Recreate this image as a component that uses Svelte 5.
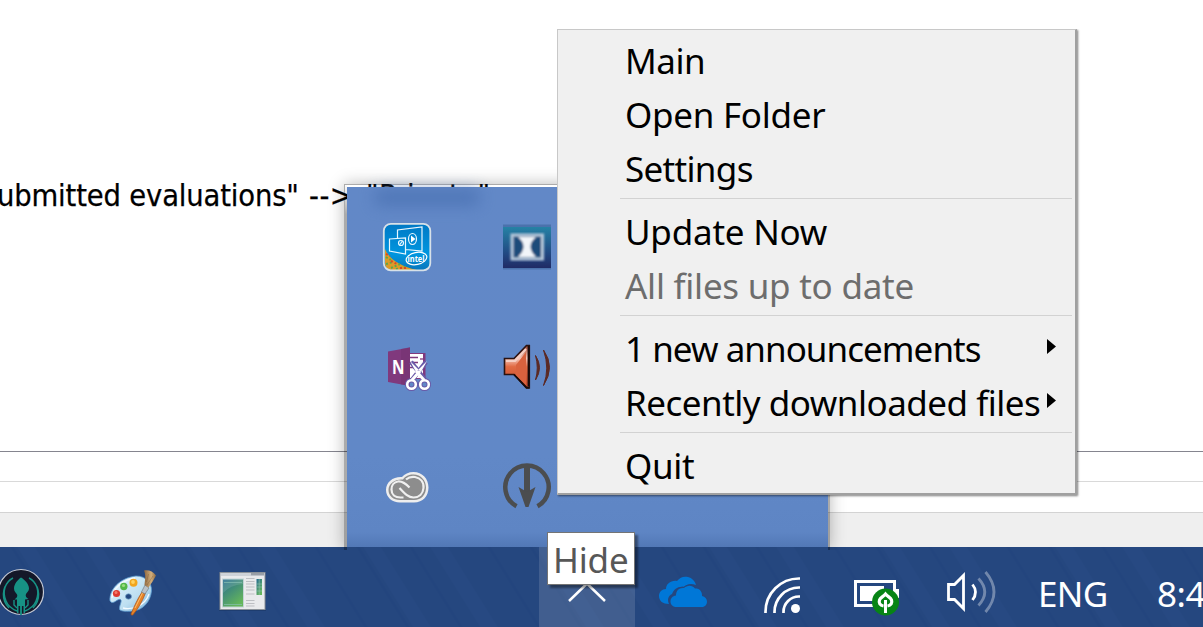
<script>
  const groups = [
    [
      { label: 'Main', gap: -0.5 },
      { label: 'Open Folder', gap: -0.28 },
      { label: 'Settings', gap: -0.68 }
    ],
    [
      { label: 'Update Now', gap: -0.22 },
      { label: 'All files up to date', gap: -0.25, disabled: true }
    ],
    [
      { label: '1 new announcements', gap: -0.96, sub: true },
      { label: 'Recently downloaded files', gap: -0.5, sub: true }
    ],
    [{ label: 'Quit', gap: -0.3 }]
  ];
</script>

<div class="screen">
  <main class="document">
    <p class="line"><span class="a">ubmitted evaluations"</span><span class="b">--&gt;</span><span class="c">"Private".</span></p>
    <div class="pane first"></div>
    <div class="pane second"></div>
    <div class="status"></div>
  </main>

  <footer class="taskbar">
    <svg class="streaks" width="1203" height="80" viewBox="0 0 1203 80">
      <defs>
        <pattern id="streak" width="173" height="80" patternUnits="userSpaceOnUse" patternTransform="skewX(32)">
          <path d="M12 0v80M65 0v80M143 0v80" stroke="#183c78" stroke-opacity=".2" stroke-width="3" />
          <path d="M26 0v80M93 0v80" stroke="#4166a0" stroke-opacity=".08" stroke-width="17" />
        </pattern>
      </defs>
      <rect width="1203" height="80" fill="url(#streak)" />
    </svg>

    <div class="apps">
      <svg width="75" height="80" viewBox="0 547 75 80">
        <circle cx="21" cy="592" r="22.5" fill="#141829" stroke="#c5cad6" stroke-width="1.2" />
        <path d="M21 577.5c-3 2-7 6.500-7 11 0 3 2 4 3 6 1 2-1 4-2.500 5l2.500 0V613h1.500v-7h1.600v9h1.800v-9h1.600v7H25v-13.500l3.500-.5c-2-1-3.500-3-2.500-5 1-2 3-3 3-5.500 0-4.500-4.500-9-8-11z" fill="#179285" />
        <g fill="none" stroke="#179285" stroke-width="1.400">
          <path d="M13 578C5 582 2 592 6 601c2 5 6 8 11 10M9 581C2 588 1 600 9 608M29 578c8 4 11 14 7 23-2 5-6 8-11 10M33 581c7 7 8 19 0 27M14 600v5l3 3M28 600v5l-3 3" />
        </g>
      </svg>
      <svg width="115" height="80" viewBox="75 547 115 80">
        <defs>
          <linearGradient id="pal" x1="0" y1="0" x2="1" y2="1"><stop offset="0" stop-color="#e9f7ff" /><stop offset=".6" stop-color="#bddff1" /><stop offset="1" stop-color="#75aeda" /></linearGradient>
          <linearGradient id="bristle" x1="0" y1="0" x2="1" y2="0"><stop offset="0" stop-color="#8c653d" /><stop offset=".6" stop-color="#d2ae7b" /><stop offset="1" stop-color="#8e693f" /></linearGradient>
        </defs>
        <path d="M110 601C109 590 119 578 136 576c10 0 16 7 15.500 15-1 11-9 19-18 20-6 .7-14 .5-14-2-.2-4 3-8 1-9.500-3-1.500-7 6-10.500 1.500z" fill="url(#pal)" stroke="#5a99ce" stroke-width=".8" />
        <path d="M112 598c1-9 10-18 23-20M123 608c9 2 22-2 26-14" fill="none" stroke="#f5fcff" stroke-width="1.300" />
        <ellipse cx="128.500" cy="596.500" rx="3" ry="2.700" fill="#24477f" stroke="#75a9cf" stroke-width=".7" />
        <circle cx="116.500" cy="593.500" r="3.600" fill="#dc3a31" /><circle cx="116" cy="592.500" r="1.500" fill="#f47a69" />
        <circle cx="123.800" cy="586.500" r="3.700" fill="#54b848" /><circle cx="123.500" cy="585.500" r="1.600" fill="#9bdc7d" />
        <circle cx="133.500" cy="582.800" r="4" fill="#f2a51e" /><circle cx="133" cy="582" r="1.900" fill="#ffd25d" />
        <path d="M142 592l3.300 1.500c-3 8-7 15-12.500 21.500-1.200.5-2-.2-1.600-1.500 3-7 6-14 10.800-21.500z" fill="#e58228" stroke="#a85217" stroke-width=".7" />
        <path d="M143 592l-8 16" stroke="#ffc06a" stroke-width="1" />
        <path d="M145 585l4 3-4 6-3.500-2z" fill="#bac2c9" stroke="#67727b" stroke-width=".6" />
        <path d="M144 570.500c4-1 9 .5 12 5-2 4-4 7-7.500 12l-4-2.500c.5-5 1.500-10-.5-14.500z" fill="url(#bristle)" />
        <path d="M147 585l6-9M146.500 582l2-8" stroke="#725332" stroke-width=".6" opacity=".6" />
      </svg>
      <svg width="110" height="80" viewBox="190 547 110 80">
        <defs><linearGradient id="scr" x1="0" y1="0" x2=".6" y2="1"><stop offset="0" stop-color="#246b91" /><stop offset="1" stop-color="#65b65b" /></linearGradient></defs>
        <rect x="219" y="572" width="47" height="39" fill="#18345f" opacity=".5" />
        <rect x="220" y="572.500" width="45" height="37" fill="#e9eaec" stroke="#8b929a" />
        <rect x="221" y="573" width="43" height="3" fill="#ced2d8" /><rect x="251" y="573" width="13" height="2.300" fill="#999fa7" />
        <rect x="222.500" y="579" width="21" height="28" fill="url(#scr)" stroke="#c2d3d5" />
        <path d="M223 593q7-8 20-9v-5h-20z" fill="#fff" opacity=".13" /><path d="M224 582.500h18M224 604.500h18" stroke="#87c0b3" stroke-width=".7" />
        <path d="M246 578.500h8.500m-8.500 3h8.500m-8.500 2.500h8.500m-8.500 3h8.500m-8.500 3h8.500m-8.500 4h8.500m-8.500 6.500h8.500m-8.500 3h8.500m-8.500 2.500h8.500" stroke="#bdbfc3" stroke-width="1" />
        <rect x="256.500" y="579" width="5.500" height="16" fill="url(#scr)" /><path d="M256.500 584h5.500m-5.500 3h5.500m-5.500 4h5.500M259.200 579v16" stroke="#9cc6bf" stroke-width=".5" />
      </svg>
    </div>

    <div class="notification">
      <div class="chevron">
        <svg width="96" height="80" viewBox="539 547 96 80"><path d="M569 601l18-17.500L605 601" fill="none" stroke="#fff" stroke-width="2.500" /></svg>
      </div>
      <svg width="96" height="80" viewBox="635 547 96 80">
        <path d="M669 604c-6 0-10-3-10-8 0-4 3-7 7-7 0-5 5-9 11-8 3-4 7-5 11-4 4 1 7 4 8 8-5-2-9-1-12 2-6-1-10 2-12 7-4 2-5 6-3 10z" fill="#0077d7" />
        <path d="M677 607c-4 0-6.500-2-6.500-5.500 0-3 2-5.500 5.500-6 0-5 3-8 8-7.500 3-3 8-3.500 11 .5 2 0 5 .5 6 3 1 1.500 1 3 1 4.500 3 .5 5 3 5 5.500 0 3-2 5.500-5 5.500z" fill="#0077d7" stroke="#25477f" stroke-width="2.400" paint-order="stroke" />
      </svg>
      <svg width="96" height="80" viewBox="731 547 96 80">
        <g fill="none" stroke="#fff" stroke-width="2.700"><path d="M765.500 613v-1a33.500 33.500 0 0 1 33.500-33.500h1M774.500 613v-1a24.500 24.500 0 0 1 24.500-24.500h1M783.500 613v-1a15.500 15.500 0 0 1 15.500-15.500h1" /></g><circle cx="795.500" cy="608.500" r="4.500" fill="#fff" />
      </svg>
      <svg width="96" height="80" viewBox="827 547 96 80">
        <rect x="855.500" y="581.500" width="39" height="24" fill="none" stroke="#fff" stroke-width="3" /><path d="M896 589h3v9h-3z" fill="#fff" /><path d="M860 586h24v4h-2v11h-22z" fill="#fff" />
        <circle cx="885.500" cy="602" r="13.500" fill="#078415" />
        <path d="M883.500 606c-3.500-.5-5-3-4-6 .8-2.500 3.500-3 6-6 2.500 3 5.200 3.500 6 6 1 3-.5 5.500-4 6" fill="none" stroke="#fff" stroke-width="3.200" /><path d="M885.500 600v13" stroke="#fff" stroke-width="3" />
      </svg>
      <svg width="96" height="80" viewBox="923 547 96 80">
        <g fill="none" stroke="#fff" stroke-width="2.800"><path d="M948.500 584.500h6l9-9v33l-9-9h-6z" /><path d="M972.500 584.500q6 7.500 0 15.500" /></g>
        <g fill="none" stroke="#fff" stroke-width="2.800" opacity=".35"><path d="M978.500 578.500q12.500 13.500 0 27M985.500 572q17 20 0 40" /></g>
      </svg>
      <span class="lang">ENG</span>
      <span class="clock">8:4</span>
    </div>
  </footer>

  <section class="flyout">
    <div class="ghost"></div>
    <div class="cell">
      <svg width="50" height="50" viewBox="382 222 50 50">
        <defs><linearGradient id="intel" x1="0" y1="0" x2="0" y2="1"><stop offset="0" stop-color="#0079c5" /><stop offset=".65" stop-color="#0096df" /><stop offset="1" stop-color="#0877bc" /></linearGradient></defs>
        <rect x="384" y="224" width="46.500" height="46" rx="7" fill="url(#intel)" />
        <path d="M385 249c4 10 15 17 32 21h-25q-7 0-7-7z" fill="#dc9a28" />
        <path d="M386 257l5 3m-5 4 7-2m-2 6 9-4m-4 5 10-2" stroke="#58a94a" stroke-width="2" stroke-dasharray="2 2" /><path d="M386 254l4 2m1 5 6 3m3 4 6 0" stroke="#d94728" stroke-width="2" stroke-dasharray="2 2" />
        <g fill="none" stroke="#e8f7ff" stroke-width="1.200"><path d="M397.500 238v-8l24.500-3v24l-16-1.500M389.500 239l16 -1v16l-16-3z" /><ellipse cx="412.500" cy="239" rx="4" ry="5.500" /><circle cx="401" cy="243" r="2.500" /><path d="M399.500 245l3-4" /></g><path d="M411 235.500l4.500 3.500-4.500 3.500z" fill="#fff" />
        <ellipse cx="416.500" cy="258.500" rx="10.500" ry="6" fill="none" stroke="#fff" stroke-width="1.200" transform="rotate(-12 416.500 258.500)" /><text x="407.500" y="262" textLength="17" lengthAdjust="spacingAndGlyphs" class="intel">intel</text>
        <rect x="383.800" y="223.800" width="46.500" height="46.500" rx="7" fill="none" stroke="#d7e1e8" stroke-width="1.800" />
      </svg>
    </div>
    <div class="cell">
      <svg width="50" height="50" viewBox="502 222 50 50">
        <defs><linearGradient id="dolby" x1="0" y1="0" x2="0" y2="1"><stop offset="0" stop-color="#2682a5" /><stop offset=".65" stop-color="#214882" /><stop offset="1" stop-color="#202b65" /></linearGradient><filter id="soft"><feGaussianBlur stdDeviation="1" /></filter></defs>
        <rect x="503" y="224.500" width="48" height="45" fill="#345b91" opacity=".5" /><rect x="503" y="227" width="48" height="41" fill="url(#dolby)" />
        <g filter="url(#soft)"><rect x="512" y="235" width="30.500" height="24" fill="#1f4b7a" stroke="#b5c8da" stroke-width="3" /><path d="M518 237h18q-11 9 0 20h-18q11-11 0-20z" fill="#f2f5f9" /></g>
      </svg>
    </div>
    <div class="cell"></div><div class="cell"></div>
    <div class="cell">
      <svg width="50" height="50" viewBox="382 342 50 50">
        <path d="M408 353h17.500v26H408z" fill="#80397d" /><path d="M410 354h13v24h-13z" fill="#fff" /><path d="M410 357.500h8m-8 5h8m-8 5h8" stroke="#80397d" stroke-width="1.300" /><path d="M420 359h5" stroke="#80397d" stroke-width="1.300" />
        <path d="M388 351.500l22-4V386l-22-4z" fill="#80397d" /><path d="M401 349l9-1.700V386l-9-1.600z" fill="#72316f" opacity=".5" /><text x="392" y="374" class="note" textLength="12.500" lengthAdjust="spacingAndGlyphs">N</text>
        <g fill="none" stroke="#695aa8" stroke-width="4.500"><path d="M411 362l14 18M426 362l-14 18" /><circle cx="411.500" cy="384.500" r="4.300" /><circle cx="424.500" cy="384.500" r="4.300" /></g>
        <g fill="none" stroke="#fff" stroke-width="2.600"><path d="M412 380l8-9M424 380l-8-9" stroke-width="3" /><circle cx="411.500" cy="384.500" r="4.300" /><circle cx="424.500" cy="384.500" r="4.300" /></g><path d="M410 361l11 11-3 3.500zM427 361l-11 11 3 3.500z" fill="#fff" />
      </svg>
    </div>
    <div class="cell">
      <svg width="50" height="50" viewBox="502 342 50 50">
        <defs><linearGradient id="horn" x1="0" y1="0" x2="0" y2="1"><stop offset="0" stop-color="#9e4531" /><stop offset=".3" stop-color="#f5c6b9" /><stop offset=".5" stop-color="#e16a43" /><stop offset="1" stop-color="#bd482a" /></linearGradient></defs>
        <path d="M504.500 358.500h9.500l12.500-13h2.800v42.500h-2.800L514 374.500h-9.500z" fill="url(#horn)" stroke="#2a1210" stroke-width="1.600" />
        <path d="M528.500 346v40M514 374.500l12.500 13h2.500" fill="none" stroke="#170b0b" stroke-width="1.800" /><path d="M506 361h9l11-12" fill="none" stroke="#f6cfc4" stroke-width="2" /><path d="M516 365l10-13v33l-10-10z" fill="#d9623e" />
        <path d="M535.500 355.500q8 12 0 24.500q3.500-12 0-24.500M543.500 350q12 17 0 35.500q6.500-17 0-35.500" fill="#5b2924" stroke="#5b2924" stroke-width="1" />
      </svg>
    </div>
    <div class="cell"></div><div class="cell"></div>
    <div class="cell">
      <svg width="50" height="50" viewBox="382 462 50 50">
        <path d="M400 502.500h14c9 0 14.500-6.500 14.500-15s-6-15.500-15-15.500c-5 0-9 2-11.500 5-9-.5-16 5-16 13 0 7 6 12.500 14 12.500z" fill="#eee" />
        <path d="M400 500h14c7.500 0 12-5.500 12-12.500s-5-13-12.500-13c-5 0-8 1.500-10.500 5-8-.5-14.500 4-14.500 10.500 0 6 5 10 11.500 10z" fill="#8d8d8d" />
        <path d="M406 479.500c3-2.500 6-3 9-2.500 5.500 1 9 5 8.500 11-.6 6-4.500 9.500-10 9.500-5 0-8-3-14-9.500M409.500 487.500c-4-4-7-6.500-11.500-6-4 .5-6.500 4-6.500 8 0 5 3.500 8 9 8h3" fill="none" stroke="#f0f0f0" stroke-width="2.200" />
      </svg>
    </div>
    <div class="cell">
      <svg width="50" height="50" viewBox="502 462 50 50">
        <path d="M516.500 506.200a21.700 21.700 0 1 1 21 0" fill="none" stroke="#4b4d4f" stroke-width="4.500" /><path d="M527 465v35" stroke="#4b4d4f" stroke-width="6" /><path d="M518.500 487l8.500 5 8.500-5-7 20h-3z" fill="#4b4d4f" />
      </svg>
    </div>
    <div class="cell"></div><div class="cell"></div>
  </section>

  <nav class="menu">
    {#each groups as group, i}
      {#if i > 0}<hr />{/if}
      {#each group as item}
        <div class="item" class:disabled={item.disabled}>
          <span style:letter-spacing="{item.gap}px">{item.label}</span>
          {#if item.sub}<i class="arrow"></i>{/if}
        </div>
      {/each}
    {/each}
  </nav>

  <div class="tooltip">Hide</div>
</div>

<style>
  :global(body) { margin: 0; overflow: hidden; }
  .screen { position: relative; width: 1203px; height: 627px; overflow: hidden; background: #fff; display: flex; flex-direction: column; font-family: "Noto Sans", "Open Sans", sans-serif; }
  svg { display: block; flex: none; }
  .document { height: 547px; display: flex; flex-direction: column; box-sizing: border-box; padding-top: 176px; }
  .line { margin: 0; height: 40px; line-height: 40px; font-family: "DejaVu Sans Condensed", "DejaVu Sans", sans-serif; font-stretch: condensed; font-size: 30.5px; white-space: pre; display: flex; color: #000; -webkit-text-stroke: .25px #000; }
  .line span { flex: none; }
  .a { width: 312px; margin-left: -3px; letter-spacing: -0.15px; }
  .b { width: 57px; letter-spacing: 0.5px; }
  .c { letter-spacing: 0.4px; }
  .pane { box-sizing: border-box; }
  .first { margin-top: 235px; height: 30px; border-top: 1px solid #85858f; }
  .second { height: 31px; border-top: 1px solid #d9d9d9; }
  .status { flex: 1; background: #efefef; border-top: 1px solid #d3d3d3; }
  .taskbar { position: relative; height: 80px; background: #25477f; display: flex; justify-content: space-between; color: #fff; }
  .streaks { position: absolute; inset: 0; }
  .apps, .notification { display: flex; position: relative; }
  .notification { width: 664px; }
  .chevron { background: rgba(255, 255, 255, .13); width: 96px; }
  .lang, .clock { font-size: 35px; line-height: 80px; padding-top: 7px; height: 73px; flex: none; }
  .lang { width: 138px; padding-left: 19px; box-sizing: border-box; line-height: 80px; letter-spacing: -0.6px; }
  .clock { white-space: nowrap; letter-spacing: -0.5px; }
  .flyout { position: absolute; left: 347px; top: 184px; width: 481px; height: 360px; padding-top: 3px; display: grid; grid-template-columns: repeat(4, 120px); grid-template-rows: repeat(3, 120px); background: linear-gradient(#6288c7, #6188c7 270px, #5e85c4 345px, #5278b6) 0 3px / 100% 360px no-repeat; }
  .flyout::before { content: ""; position: absolute; left: -3px; right: -2px; top: 0; bottom: -3px; box-sizing: border-box; border: 1px solid rgba(0, 0, 0, .33); border-bottom: 0; box-shadow: 0 0 15px rgba(0, 0, 0, .28); clip-path: inset(-25px -25px 0 -25px); }
  .flyout::after { content: ""; position: absolute; left: -2px; right: -1px; top: 1px; bottom: -3px; box-sizing: border-box; border: solid; border-width: 0 1px 0 2px; border-image: linear-gradient(rgba(0, 0, 0, 0), rgba(0, 0, 0, .33) 30px) 1; }
  .ghost { position: absolute; left: 28px; top: 6px; width: 104px; height: 15px; background: #4068aa; opacity: .6; filter: blur(8px); }
  .cell { display: flex; align-items: center; justify-content: center; }
  .intel { font: bold 9px "Open Sans", sans-serif; fill: #fff; }
  .note { font: bold 19px "Open Sans", sans-serif; fill: #fff; }
  .menu { position: absolute; left: 557px; top: 29px; width: 520px; height: 466px; box-sizing: border-box; padding-top: 4px; border: 1px solid #c8c8c8; border-right: 2px solid #a0a0a0; border-bottom: 2px solid #a0a0a0; background: #f0f0f0; box-shadow: 1px 1px 2px rgba(0, 0, 0, .5); clip-path: inset(0 -6px -6px 0); }
  .item { height: 54px; display: flex; align-items: center; justify-content: space-between; padding: 0 19px 0 67px; font-size: 35px; line-height: 54px; color: #000; white-space: nowrap; }
  .disabled { color: #6d6d6d; }
  .arrow { flex: none; width: 9px; height: 15px; background: #000; clip-path: polygon(0 0, 100% 50%, 0 100%); margin-top: -5px; }
  hr { height: 1px; border: 0; margin: 2px 3px 6px 62px; background: #d2d2d2; }
  .tooltip { position: absolute; left: 547px; top: 532px; width: 88px; height: 53px; box-sizing: border-box; border: 1px solid #747474; background: #fff; color: #575757; font-size: 35px; line-height: 54px; padding-left: 5px; letter-spacing: -.2px; box-shadow: 3px 3px 2px rgba(0, 0, 0, .4); }
</style>
